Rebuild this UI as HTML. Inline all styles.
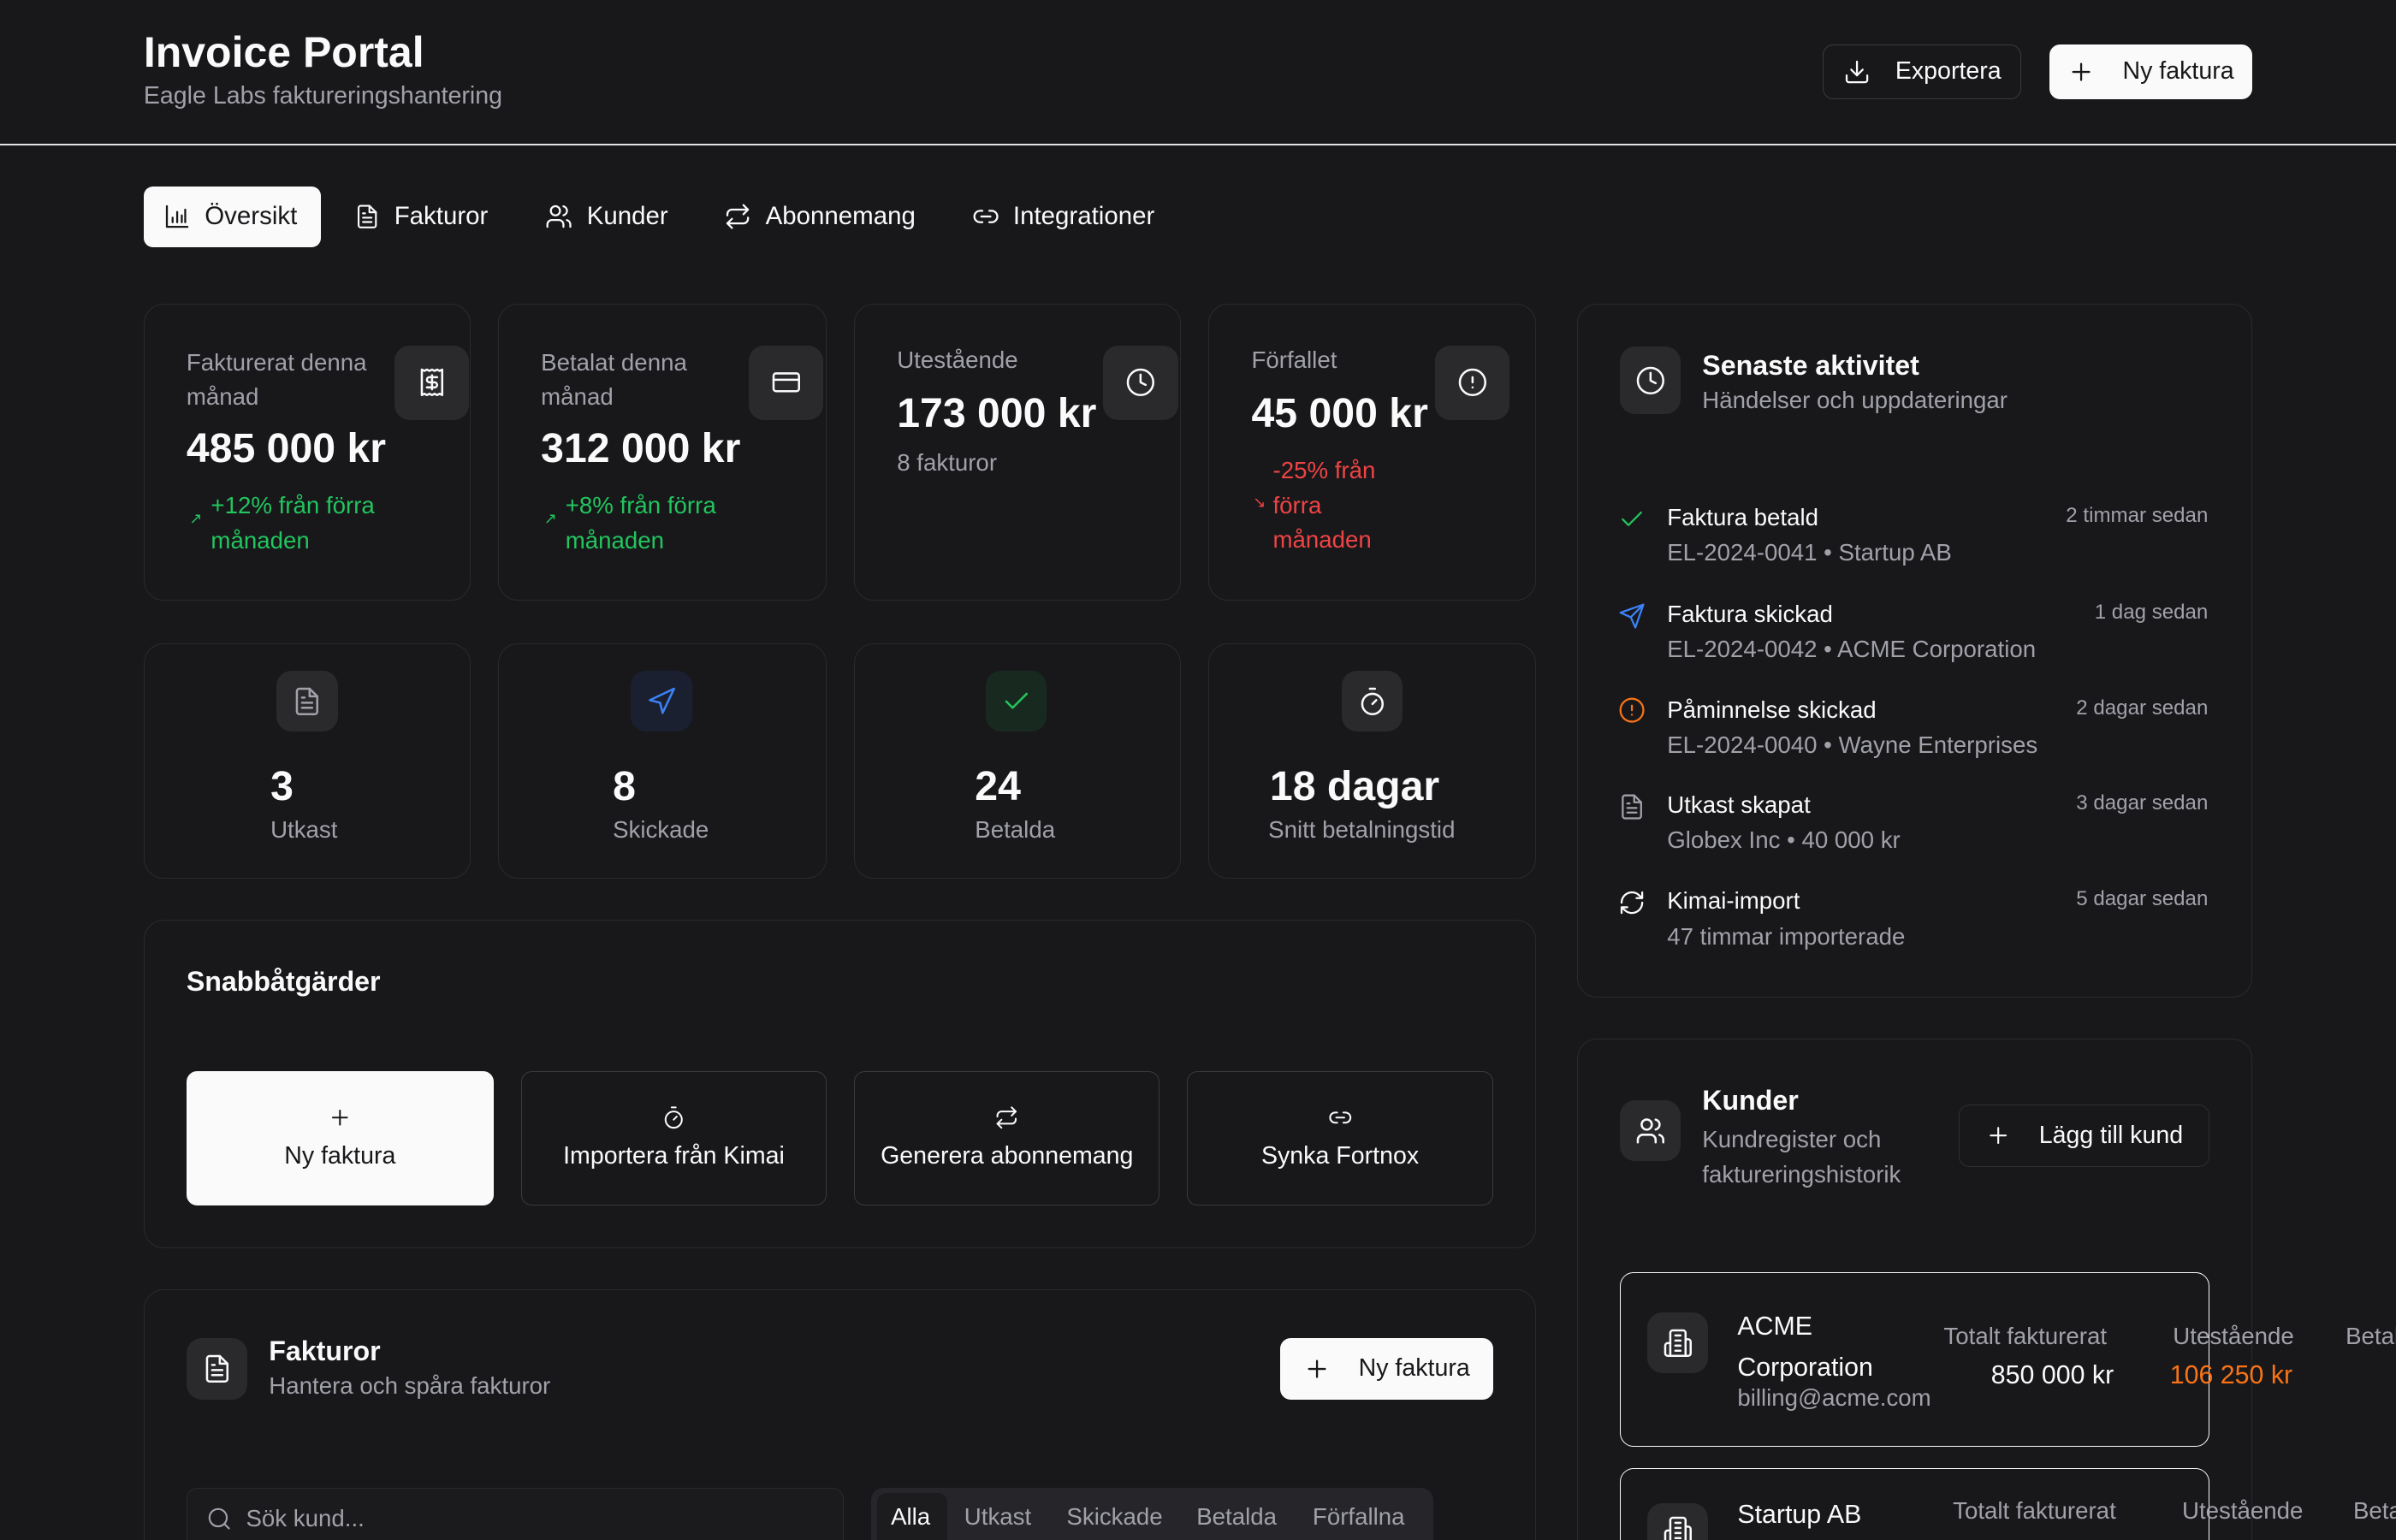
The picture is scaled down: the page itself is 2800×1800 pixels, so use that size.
<!DOCTYPE html>
<html><head><meta charset="utf-8">
<style>
*{box-sizing:border-box;margin:0;padding:0}
html,body{width:2800px;height:1800px;overflow:hidden;background:#18181b}
#w{position:relative;width:1568px;height:1008px;zoom:1.785714;overflow:hidden;background:#18181b;font-family:"Liberation Sans","DejaVu Sans",sans-serif;color:#fafafa}
.a{position:absolute;white-space:nowrap}
.card{position:absolute;border:1px solid #2a2a2e;border-radius:13px;background:#18181b}
.ob{border-bottom:none;border-bottom-left-radius:0;border-bottom-right-radius:0}
.ib{position:absolute;background:#2a2a2d;border-radius:10px;display:flex;align-items:center;justify-content:center}
.g{color:#a1a1aa}
.b{font-weight:bold}
svg{fill:none;stroke:currentColor;stroke-width:1.7;stroke-linecap:round;stroke-linejoin:round}
.btn{position:absolute;border:1px solid #3a3a3e;border-radius:7px;display:flex;align-items:center;justify-content:center;font-size:16px;color:#fafafa}
.wb{background:#fafafa;color:#18181b;border-color:#fafafa}
.t15{font-size:15.5px}
</style></head><body><div id="w">

<div class="a b" style="left:94px;top:18px;font-size:28px">Invoice Portal</div>
<div class="a g" style="left:94px;top:54px;font-size:16px">Eagle Labs faktureringshantering</div>
<div class="btn" style="left:1193px;top:29px;width:130px;height:36px"><svg width="18" height="18" viewBox="0 0 24 24" style="margin-right:16px"><path d="M21 15v4a2 2 0 0 1-2 2H5a2 2 0 0 1-2-2v-4"/><path d="M7 10l5 5 5-5"/><path d="M12 15V3"/></svg>Exportera</div>
<div class="btn wb" style="left:1341px;top:29px;width:133px;height:36px"><svg width="18" height="18" viewBox="0 0 24 24" style="margin-right:18px"><path d="M5 12h14M12 5v14"/></svg>Ny faktura</div>
<div class="a" style="left:0;top:94px;width:1568px;height:1px;background:#e4e4e7"></div>

<!-- tabs -->
<div class="a" style="left:94px;top:122px;width:116px;height:40px;background:#fafafa;border-radius:6px"></div>
<div class="a" style="left:107px;top:132px;color:#18181b;font-size:16.5px;display:flex;align-items:center"><svg width="18" height="18" viewBox="0 0 24 24" style="margin-right:9px"><path d="M3 3v18h18"/><path d="M8 17v-4M12 17V8M16 17v-6M19 17V6"/></svg>Översikt</div>
<div class="a" style="left:232px;top:132px;font-size:16.5px;display:flex;align-items:center"><svg width="17" height="17" viewBox="0 0 24 24" style="margin-right:9px"><path d="M14 2H6a2 2 0 0 0-2 2v16a2 2 0 0 0 2 2h12a2 2 0 0 0 2-2V8z"/><path d="M14 2v6h6M8 13h8M8 17h8M8 9h2"/></svg>Fakturor</div>
<div class="a" style="left:357px;top:132px;font-size:16.5px;display:flex;align-items:center"><svg width="18" height="18" viewBox="0 0 24 24" style="margin-right:9px"><circle cx="9" cy="7" r="4"/><path d="M2 21v-2a4 4 0 0 1 4-4h6a4 4 0 0 1 4 4v2M16 3.1a4 4 0 0 1 0 7.8M22 21v-2a4 4 0 0 0-3-3.9"/></svg>Kunder</div>
<div class="a" style="left:474px;top:132px;font-size:16.5px;display:flex;align-items:center"><svg width="18" height="18" viewBox="0 0 24 24" style="margin-right:9px"><path d="M17 2l4 4-4 4"/><path d="M3 11v-1a4 4 0 0 1 4-4h14M7 22l-4-4 4-4"/><path d="M21 13v1a4 4 0 0 1-4 4H3"/></svg>Abonnemang</div>
<div class="a" style="left:636px;top:132px;font-size:16.5px;display:flex;align-items:center"><svg width="18" height="18" viewBox="0 0 24 24" style="margin-right:9px"><path d="M9 17H7A5 5 0 0 1 7 7h2M15 7h2a5 5 0 0 1 0 10h-2M8 12h8"/></svg>Integrationer</div>

<!-- stat row 1 -->
<div class="card" style="left:94px;top:199px;width:214px;height:194px"></div>
<div class="card" style="left:326px;top:199px;width:215px;height:194px"></div>
<div class="card" style="left:559px;top:199px;width:214px;height:194px"></div>
<div class="card" style="left:791px;top:199px;width:214px;height:194px"></div>

<div class="a g t15" style="left:122px;top:226px;line-height:22.5px">Fakturerat denna<br>månad</div>
<div class="ib" style="left:258px;top:226px;width:49px;height:49px"><svg width="20" height="20" viewBox="0 0 24 24"><path d="M4 2v20l2-1 2 1 2-1 2 1 2-1 2 1 2-1 2 1V2l-2 1-2-1-2 1-2-1-2 1-2-1-2 1z"/><path d="M16 8h-6a2 2 0 1 0 0 4h4a2 2 0 1 1 0 4H8M12 17.5v-11"/></svg></div>
<div class="a b" style="left:122px;top:278px;font-size:27px">485 000 kr</div>
<div class="a t15" style="left:138px;top:320px;color:#22c55e;line-height:22.5px">+12% från förra<br>månaden</div>
<div class="a" style="left:124px;top:334px;color:#22c55e;font-size:10px">↗</div>

<div class="a g t15" style="left:354px;top:226px;line-height:22.5px">Betalat denna<br>månad</div>
<div class="ib" style="left:490px;top:226px;width:49px;height:49px"><svg width="20" height="20" viewBox="0 0 24 24"><rect x="2" y="5" width="20" height="14" rx="2"/><path d="M2 10h20"/></svg></div>
<div class="a b" style="left:354px;top:278px;font-size:27px">312 000 kr</div>
<div class="a t15" style="left:370px;top:320px;color:#22c55e;line-height:22.5px">+8% från förra<br>månaden</div>
<div class="a" style="left:356px;top:334px;color:#22c55e;font-size:10px">↗</div>

<div class="a g t15" style="left:587px;top:227px">Utestående</div>
<div class="ib" style="left:722px;top:226px;width:49px;height:49px"><svg width="20" height="20" viewBox="0 0 24 24"><circle cx="12" cy="12" r="10"/><path d="M12 6v6l4 2"/></svg></div>
<div class="a b" style="left:587px;top:255px;font-size:27px">173 000 kr</div>
<div class="a g t15" style="left:587px;top:294px">8 fakturor</div>

<div class="a g t15" style="left:819px;top:227px">Förfallet</div>
<div class="ib" style="left:939px;top:226px;width:49px;height:49px"><svg width="20" height="20" viewBox="0 0 24 24"><circle cx="12" cy="12" r="10"/><path d="M12 8v4M12 16h.01"/></svg></div>
<div class="a b" style="left:819px;top:255px;font-size:27px">45 000 kr</div>
<div class="a t15" style="left:833px;top:297px;color:#ef4444;line-height:22.5px">-25% från<br>förra<br>månaden</div>
<div class="a" style="left:820px;top:323px;color:#ef4444;font-size:10px">↘</div>

<!-- stat row 2 -->
<div class="card" style="left:94px;top:421px;width:214px;height:154px"></div>
<div class="card" style="left:326px;top:421px;width:215px;height:154px"></div>
<div class="card" style="left:559px;top:421px;width:214px;height:154px"></div>
<div class="card" style="left:791px;top:421px;width:214px;height:154px"></div>
<div class="ib" style="left:181px;top:439px;width:40px;height:40px;color:#a1a1aa"><svg width="20" height="20" viewBox="0 0 24 24"><path d="M14 2H6a2 2 0 0 0-2 2v16a2 2 0 0 0 2 2h12a2 2 0 0 0 2-2V8z"/><path d="M14 2v6h6M8 13h8M8 17h8M8 9h2"/></svg></div>
<div class="ib" style="left:413px;top:439px;width:40px;height:40px;background:#1a2030;color:#3b82f6"><svg width="20" height="20" viewBox="0 0 24 24"><path d="M3 11l19-9-9 19-2-8z"/></svg></div>
<div class="ib" style="left:645px;top:439px;width:40px;height:40px;background:#182a20;color:#22c55e"><svg width="20" height="20" viewBox="0 0 24 24"><path d="M20 6L9 17l-5-5"/></svg></div>
<div class="ib" style="left:878px;top:439px;width:40px;height:40px"><svg width="20" height="20" viewBox="0 0 24 24"><circle cx="12" cy="14" r="8"/><path d="M10 2h4M12 14l3-3"/></svg></div>
<div class="a b" style="left:177px;top:499px;font-size:27px">3</div>
<div class="a g t15" style="left:177px;top:534px">Utkast</div>
<div class="a b" style="left:401px;top:499px;font-size:27px">8</div>
<div class="a g t15" style="left:401px;top:534px">Skickade</div>
<div class="a b" style="left:638px;top:499px;font-size:27px">24</div>
<div class="a g t15" style="left:638px;top:534px">Betalda</div>
<div class="a b" style="left:831px;top:499px;font-size:27px">18 dagar</div>
<div class="a g t15" style="left:830px;top:534px">Snitt betalningstid</div>

<!-- quick actions -->
<div class="card" style="left:94px;top:602px;width:911px;height:215px"></div>
<div class="a b" style="left:122px;top:632px;font-size:18px">Snabbåtgärder</div>
<div class="btn wb" style="left:122px;top:701px;width:201px;height:88px;flex-direction:column"><svg width="16" height="16" viewBox="0 0 24 24"><path d="M5 12h14M12 5v14"/></svg><div style="margin-top:8px">Ny faktura</div></div>
<div class="btn" style="left:341px;top:701px;width:200px;height:88px;flex-direction:column"><svg width="16" height="16" viewBox="0 0 24 24"><circle cx="12" cy="14" r="8"/><path d="M10 2h4M12 14l3-3"/></svg><div style="margin-top:8px">Importera från Kimai</div></div>
<div class="btn" style="left:559px;top:701px;width:200px;height:88px;flex-direction:column"><svg width="16" height="16" viewBox="0 0 24 24"><path d="M17 2l4 4-4 4"/><path d="M3 11v-1a4 4 0 0 1 4-4h14M7 22l-4-4 4-4"/><path d="M21 13v1a4 4 0 0 1-4 4H3"/></svg><div style="margin-top:8px">Generera abonnemang</div></div>
<div class="btn" style="left:777px;top:701px;width:200px;height:88px;flex-direction:column"><svg width="16" height="16" viewBox="0 0 24 24"><path d="M9 17H7A5 5 0 0 1 7 7h2M15 7h2a5 5 0 0 1 0 10h-2M8 12h8"/></svg><div style="margin-top:8px">Synka Fortnox</div></div>

<!-- fakturor -->
<div class="card ob" style="left:94px;top:844px;width:911px;height:164px"></div>
<div class="ib" style="left:122px;top:876px;width:40px;height:40px"><svg width="20" height="20" viewBox="0 0 24 24"><path d="M14 2H6a2 2 0 0 0-2 2v16a2 2 0 0 0 2 2h12a2 2 0 0 0 2-2V8z"/><path d="M14 2v6h6M8 13h8M8 17h8M8 9h2"/></svg></div>
<div class="a b" style="left:176px;top:874px;font-size:18px">Fakturor</div>
<div class="a g t15" style="left:176px;top:898px">Hantera och spåra fakturor</div>
<div class="btn wb" style="left:838px;top:876px;width:139px;height:40px"><svg width="18" height="18" viewBox="0 0 24 24" style="margin-right:18px"><path d="M5 12h14M12 5v14"/></svg>Ny faktura</div>
<div class="a ob" style="left:122px;top:974px;width:430px;height:34px;border:1px solid #2a2a2e;border-bottom:none;border-radius:7px 7px 0 0;background:#1b1b1e"></div>
<div class="a g" style="left:135px;top:985px;font-size:15.5px;display:flex;align-items:center"><svg width="17" height="17" viewBox="0 0 24 24" style="margin-right:9px"><circle cx="11" cy="11" r="8"/><path d="M21 21l-4.3-4.3"/></svg>Sök kund...</div>
<div class="a" style="left:570px;top:974px;width:368px;height:34px;background:#26262a;border-radius:8px 8px 0 0"></div>
<div class="a" style="left:574px;top:977px;width:46px;height:31px;background:#1c1c1f;border-radius:6px 6px 0 0"></div>
<div class="a t15" style="left:583px;top:984px">Alla</div>
<div class="a g t15" style="left:631px;top:984px">Utkast</div>
<div class="a g t15" style="left:698px;top:984px">Skickade</div>
<div class="a g t15" style="left:783px;top:984px">Betalda</div>
<div class="a g t15" style="left:859px;top:984px">Förfallna</div>

<!-- activity -->
<div class="card" style="left:1032px;top:199px;width:442px;height:454px"></div>
<div class="ib" style="left:1060px;top:227px;width:40px;height:44px"><svg width="20" height="20" viewBox="0 0 24 24"><circle cx="12" cy="12" r="10"/><path d="M12 6v6l4 2"/></svg></div>
<div class="a b" style="left:1114px;top:229px;font-size:18px">Senaste aktivitet</div>
<div class="a g t15" style="left:1114px;top:253px">Händelser och uppdateringar</div>

<div class="a" style="left:1059px;top:331px;color:#22c55e"><svg width="18" height="18" viewBox="0 0 24 24"><path d="M20 6L9 17l-5-5"/></svg></div>
<div class="a t15" style="left:1091px;top:330px">Faktura betald</div>
<div class="a g t15" style="left:1091px;top:353px">EL-2024-0041 • Startup AB</div>
<div class="a g" style="right:123px;top:330px;font-size:13.5px">2 timmar sedan</div>

<div class="a" style="left:1059px;top:394px;color:#3b82f6"><svg width="18" height="18" viewBox="0 0 24 24"><path d="M22 2L11 13M22 2l-7 20-4-9-9-4z"/></svg></div>
<div class="a t15" style="left:1091px;top:393px">Faktura skickad</div>
<div class="a g t15" style="left:1091px;top:416px">EL-2024-0042 • ACME Corporation</div>
<div class="a g" style="right:123px;top:393px;font-size:13.5px">1 dag sedan</div>

<div class="a" style="left:1059px;top:456px;color:#f97316"><svg width="18" height="18" viewBox="0 0 24 24"><circle cx="12" cy="12" r="10"/><path d="M12 8v4M12 16h.01"/></svg></div>
<div class="a t15" style="left:1091px;top:456px">Påminnelse skickad</div>
<div class="a g t15" style="left:1091px;top:479px">EL-2024-0040 • Wayne Enterprises</div>
<div class="a g" style="right:123px;top:456px;font-size:13.5px">2 dagar sedan</div>

<div class="a g" style="left:1059px;top:519px"><svg width="18" height="18" viewBox="0 0 24 24"><path d="M14 2H6a2 2 0 0 0-2 2v16a2 2 0 0 0 2 2h12a2 2 0 0 0 2-2V8z"/><path d="M14 2v6h6M8 13h8M8 17h8M8 9h2"/></svg></div>
<div class="a t15" style="left:1091px;top:518px">Utkast skapat</div>
<div class="a g t15" style="left:1091px;top:541px">Globex Inc • 40 000 kr</div>
<div class="a g" style="right:123px;top:518px;font-size:13.5px">3 dagar sedan</div>

<div class="a" style="left:1059px;top:582px"><svg width="18" height="18" viewBox="0 0 24 24"><path d="M3 12a9 9 0 0 1 15-6.7L21 8M21 3v5h-5M21 12a9 9 0 0 1-15 6.7L3 16M3 21v-5h5"/></svg></div>
<div class="a t15" style="left:1091px;top:581px">Kimai-import</div>
<div class="a g t15" style="left:1091px;top:604px">47 timmar importerade</div>
<div class="a g" style="right:123px;top:581px;font-size:13.5px">5 dagar sedan</div>

<!-- kunder -->
<div class="card ob" style="left:1032px;top:680px;width:442px;height:328px"></div>
<div class="ib" style="left:1060px;top:720px;width:40px;height:40px"><svg width="20" height="20" viewBox="0 0 24 24"><circle cx="9" cy="7" r="4"/><path d="M2 21v-2a4 4 0 0 1 4-4h6a4 4 0 0 1 4 4v2M16 3.1a4 4 0 0 1 0 7.8M22 21v-2a4 4 0 0 0-3-3.9"/></svg></div>
<div class="a b" style="left:1114px;top:710px;font-size:18px">Kunder</div>
<div class="a g t15" style="left:1114px;top:734px;line-height:23px">Kundregister och<br>faktureringshistorik</div>
<div class="btn" style="left:1282px;top:723px;width:164px;height:41px;border-color:#2e2e32"><svg width="17" height="17" viewBox="0 0 24 24" style="margin-right:18px"><path d="M5 12h14M12 5v14"/></svg>Lägg till kund</div>

<div class="a" style="left:1060px;top:833px;width:386px;height:114px;border:1px solid #fafafa;border-radius:9px"></div>
<div class="ib" style="left:1078px;top:859px;width:40px;height:40px"><svg width="20" height="20" viewBox="0 0 24 24"><path d="M6 22V4a2 2 0 0 1 2-2h8a2 2 0 0 1 2 2v18z"/><path d="M6 12H4a2 2 0 0 0-2 2v6a2 2 0 0 0 2 2h2M18 9h2a2 2 0 0 1 2 2v9a2 2 0 0 1-2 2h-2M10 6h4M10 10h4M10 14h4M10 18h4"/></svg></div>
<div class="a" style="left:1137px;top:855px;font-size:17px;line-height:27px">ACME<br>Corporation</div>
<div class="a g t15" style="left:1137px;top:906px">billing@acme.com</div>
<div class="a g t15" style="left:1272px;top:866px">Totalt fakturerat</div>
<div class="a" style="left:1303px;top:891px;font-size:17px">850 000 kr</div>
<div class="a g t15" style="left:1422px;top:866px">Utestående</div>
<div class="a" style="left:1420px;top:891px;font-size:17px;color:#f97316">106 250 kr</div>
<div class="a g t15" style="left:1535px;top:866px">Betalt</div>

<div class="a" style="left:1060px;top:961px;width:386px;height:47px;border:1px solid #fafafa;border-bottom:none;border-radius:9px 9px 0 0"></div>
<div class="ib" style="left:1078px;top:984px;width:40px;height:24px;border-radius:10px 10px 0 0;align-items:flex-start;padding-top:8px;overflow:hidden"><svg width="20" height="20" viewBox="0 0 24 24"><path d="M6 22V4a2 2 0 0 1 2-2h8a2 2 0 0 1 2 2v18z"/><path d="M6 12H4a2 2 0 0 0-2 2v6a2 2 0 0 0 2 2h2M18 9h2a2 2 0 0 1 2 2v9a2 2 0 0 1-2 2h-2M10 6h4M10 10h4M10 14h4M10 18h4"/></svg></div>
<div class="a" style="left:1137px;top:982px;font-size:17px">Startup AB</div>
<div class="a g t15" style="left:1278px;top:980px">Totalt fakturerat</div>
<div class="a g t15" style="left:1428px;top:980px">Utestående</div>
<div class="a g t15" style="left:1540px;top:980px">Betalt</div>

</div></body></html>
